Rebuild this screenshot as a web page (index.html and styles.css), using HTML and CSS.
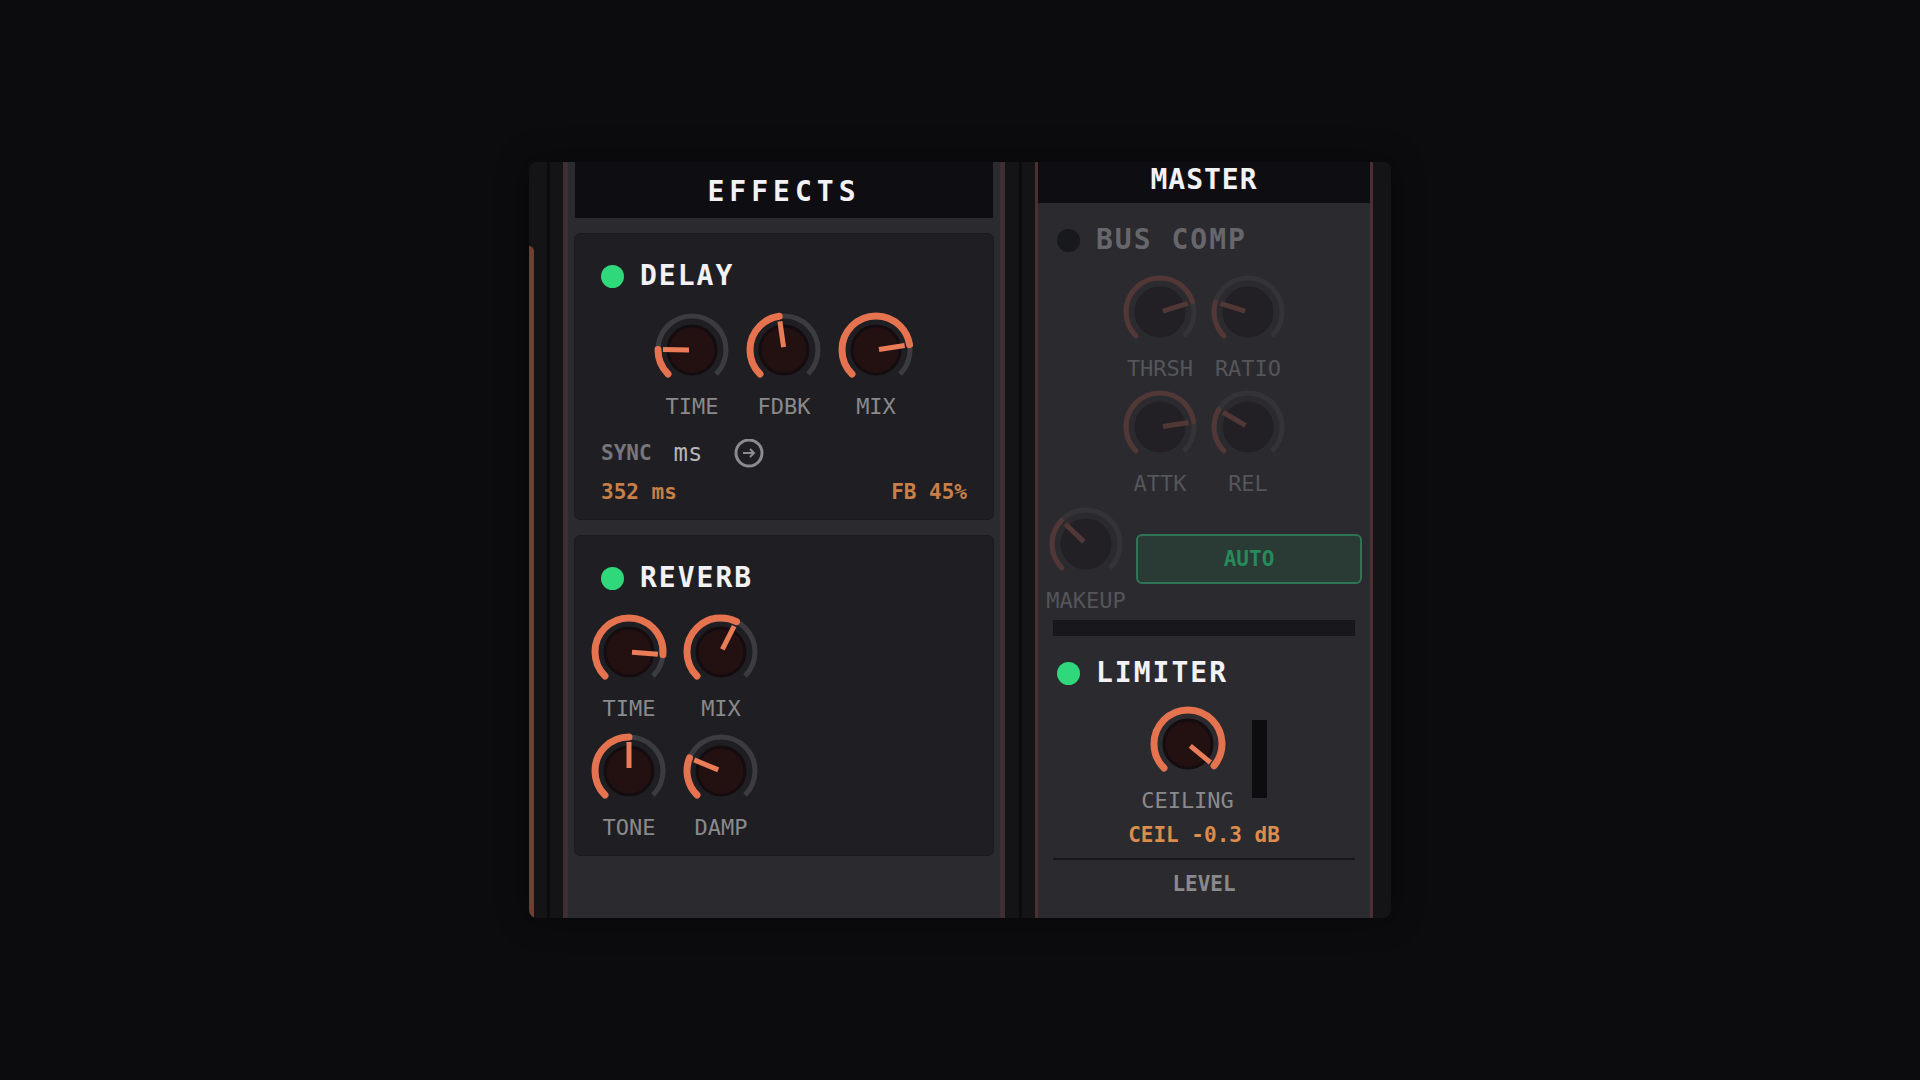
FILE: index.html
```
<!DOCTYPE html>
<html lang="en">
<head>
    <meta charset="UTF-8">
    <meta name="viewport" content="width=device-width, initial-scale=1.0">
    <title>Effects and Master</title>
    <link rel="stylesheet" href="styles.css">
</head>
<body>

    <main class="rack">
        <div class="rail rail-first"></div>

        <section class="panel effects">
            <h2 class="panel-title">EFFECTS</h2>

            <div class="card">
                <div class="module-head">
                    <button class="led on" type="button" aria-label="Delay on"></button>
                    <h3>DELAY</h3>
                </div>
                <div class="knob-row">
                    <div class="knob">
                        <input type="range" id="delayTime" value="17">
                        <label for="delayTime">TIME</label>
                    </div>
                    <div class="knob">
                        <input type="range" id="delayFdbk" value="47">
                        <label for="delayFdbk">FDBK</label>
                    </div>
                    <div class="knob">
                        <input type="range" id="delayMix" value="80">
                        <label for="delayMix">MIX</label>
                    </div>
                </div>
                <div class="sync-row">
                    <label for="sync">SYNC</label>
                    <select id="sync">
                        <option>ms</option>
                        <option>1/4</option>
                        <option>1/8</option>
                    </select>
                    <button class="next" type="button" aria-label="Next sync mode">
                        <svg viewBox="0 0 30 30">
                            <circle cx="15" cy="14" r="13"/>
                            <path d="M9 14h11M16 10l4 4l-4 4"/>
                        </svg>
                    </button>
                </div>
                <div class="readouts">
                    <span>352 ms</span>
                    <span>FB 45%</span>
                </div>
            </div>

            <div class="card">
                <div class="module-head">
                    <button class="led on" type="button" aria-label="Reverb on"></button>
                    <h3>REVERB</h3>
                </div>
                <div class="knob-grid">
                    <div class="knob">
                        <input type="range" id="reverbTime" value="85">
                        <label for="reverbTime">TIME</label>
                    </div>
                    <div class="knob">
                        <input type="range" id="reverbMix" value="60">
                        <label for="reverbMix">MIX</label>
                    </div>
                    <div class="knob">
                        <input type="range" id="reverbTone" value="50">
                        <label for="reverbTone">TONE</label>
                    </div>
                    <div class="knob">
                        <input type="range" id="reverbDamp" value="25">
                        <label for="reverbDamp">DAMP</label>
                    </div>
                </div>
            </div>
        </section>

        <div class="rail"></div>

        <section class="panel master">
            <h2 class="panel-title">MASTER</h2>

            <div class="bus-comp">
                <div class="module-head">
                    <button class="led" type="button" aria-label="Bus comp off"></button>
                    <h3>BUS COMP</h3>
                </div>
                <div class="knob-grid">
                    <div class="knob">
                        <input type="range" id="compThresh" value="77">
                        <label for="compThresh">THRSH</label>
                    </div>
                    <div class="knob">
                        <input type="range" id="compRatio" value="23">
                        <label for="compRatio">RATIO</label>
                    </div>
                    <div class="knob">
                        <input type="range" id="compAttack" value="80">
                        <label for="compAttack">ATTK</label>
                    </div>
                    <div class="knob">
                        <input type="range" id="compRelease" value="28">
                        <label for="compRelease">REL</label>
                    </div>
                </div>
                <div class="makeup-row">
                    <div class="knob">
                        <input type="range" id="compMakeup" value="33">
                        <label for="compMakeup">MAKEUP</label>
                    </div>
                    <button class="auto" type="button">AUTO</button>
                </div>
                <div class="reduction"></div>
            </div>

            <div class="limiter">
                <div class="module-head">
                    <button class="led on" type="button" aria-label="Limiter on"></button>
                    <h3>LIMITER</h3>
                </div>
                <div class="ceiling-row">
                    <div class="knob">
                        <input type="range" id="ceiling" value="98">
                        <label for="ceiling">CEILING</label>
                    </div>
                    <div class="meter"></div>
                </div>
                <div class="readout">CEIL -0.3 dB</div>
            </div>

            <div class="level">LEVEL</div>
        </section>

        <div class="rail rail-last"></div>
    </main>

    <script>
        // The dial sweeps 270 degrees, starting at the lower left
        const ARC = 'M-24 24A34 34 0 1 1 24 24';

        function drawKnob(knob) {
            const value = knob.querySelector('input').value;
            const sweep = value * 2.7;
            knob.querySelector('svg').innerHTML =
                '<path class="track" d="' + ARC + '"/>' +
                '<circle class="cap" r="24"/>' +
                '<path class="value" pathLength="270" stroke-dasharray="' + sweep + ' 400" d="' + ARC + '"/>' +
                '<path class="pointer" d="M0 -3V-29" transform="rotate(' + (sweep - 135) + ')"/>';
        }

        document.querySelectorAll('.knob').forEach(function(knob) {
            const svg = document.createElementNS('http://www.w3.org/2000/svg', 'svg');
            svg.setAttribute('viewBox', '-40 -40 80 80');
            svg.setAttribute('class', 'dial');
            knob.prepend(svg);
            drawKnob(knob);
            knob.querySelector('input').addEventListener('input', function() {
                drawKnob(knob);
            });
        });
    </script>

</body>
</html>
```
FILE: styles.css
```
* {
    box-sizing: border-box;
}

body {
    font-family: "DejaVu Sans Mono", "Liberation Mono", monospace;
    background-color: #0c0c0e;
    display: flex;
    justify-content: center;
    align-items: center;
    height: 100vh;
    margin: 0;
}

h2,
h3 {
    margin: 0;
    font-size: 28px;
    line-height: 32px;
    font-weight: bold;
    color: #f2f2f4;
}

h3 {
    letter-spacing: 2px;
}

button,
select {
    font-family: inherit;
    border: none;
    padding: 0;
    cursor: pointer;
}

.rack {
    display: grid;
    grid-template-columns: 34px 1fr 30px 338px 18px;
    width: 90%;
    max-width: 862px;
    height: 70vh;
    overflow: hidden;
    border-radius: 8px;
    background-color: #141417;
    box-shadow: 0 0 32px rgba(0, 0, 0, 0.4);
}

.rail {
    background: linear-gradient(#0a0a10, #0a0a10) center / 3px 100% no-repeat #141417;
}

.rail-first {
    display: flex;
    background-position: 18px 0;
    padding-top: 84px;
}

.rail-first::before {
    content: "";
    width: 5px;
    background-color: #703f33;
    border-top-right-radius: 5px;
}

.rail-last {
    background: #141417;
}

.panel {
    background-color: #2a2a2f;
    min-height: 0;
    overflow: hidden;
}

.panel-title {
    background-color: #0e0d12;
    text-align: center;
}

.effects {
    border: solid #3d2e32;
    border-width: 0 5px;
    padding: 0 6px;
}

.effects .panel-title {
    margin: 0 1px;
    padding: 14px 0 10px;
    letter-spacing: 5px;
}

.card {
    background-color: #1f1f23;
    border: 1px solid #1b1b1f;
    border-radius: 6px;
    margin-top: 15px;
    padding: 26px 14px 15px;
}

.module-head {
    display: flex;
    align-items: center;
    gap: 16px;
    padding-left: 12px;
}

.led {
    width: 23px;
    height: 23px;
    border-radius: 50%;
    background-color: #18191d;
}

.led.on {
    background-color: #2fd87a;
}

.knob {
    position: relative;
    display: flex;
    flex-direction: column;
    align-items: center;
    gap: 5px;
    min-width: 80px;
}

.knob label {
    font-size: 22px;
    line-height: 24px;
    color: #8a8a8d;
}

.knob input {
    position: absolute;
    top: 0;
    left: 0;
    width: 100%;
    height: 80px;
    margin: 0;
    opacity: 0;
    cursor: pointer;
}

.dial {
    width: 80px;
    height: 80px;
    fill: none;
    stroke-linecap: round;
}

.dial .track {
    stroke: #3c3c40;
    stroke-width: 5;
    stroke-linecap: butt;
}

.dial .cap {
    fill: #231112;
    stroke: #140c0e;
    stroke-width: 3;
}

.dial .value {
    stroke: #e57350;
    stroke-width: 7;
}

.dial .pointer {
    stroke: #ea7d58;
    stroke-width: 5;
    stroke-linecap: butt;
}

.knob-row {
    display: flex;
    justify-content: center;
    gap: 12px;
    margin-top: 18px;
}

.knob-grid {
    display: grid;
    grid-template-columns: 80px 80px;
    gap: 10px 12px;
    margin-top: 18px;
}

.sync-row {
    display: flex;
    align-items: center;
    margin-top: 20px;
    padding-left: 12px;
}

.sync-row label {
    font-size: 21px;
    line-height: 28px;
    font-weight: bold;
    color: #77777b;
}

.sync-row select {
    appearance: none;
    width: 60px;
    height: 28px;
    margin-left: 22px;
    background: none;
    font-size: 24px;
    color: #b5b5b8;
}

.next {
    width: 30px;
    height: 28px;
    background: none;
}

.next svg {
    display: block;
    width: 30px;
    height: 30px;
    fill: none;
    stroke: #8c8c90;
    stroke-width: 3;
}

.next path {
    stroke-width: 2;
}

.readouts {
    display: flex;
    justify-content: space-between;
    margin-top: 13px;
    padding: 0 12px;
}

.readouts,
.readout {
    font-size: 21px;
    line-height: 24px;
    font-weight: bold;
    color: #c97f47;
}

.master {
    border: solid #4a302e;
    border-width: 0 3px;
}

.master .panel-title {
    padding: 2px 0 7px;
    letter-spacing: 1px;
}

.bus-comp {
    padding: 21px 8px 0;
}

.bus-comp .module-head,
.limiter .module-head {
    padding-left: 11px;
}

.bus-comp h3 {
    color: #67676b;
}

.bus-comp .knob-grid {
    justify-content: center;
    gap: 6px 8px;
    margin-top: 16px;
}

.bus-comp .knob label {
    color: #55555a;
}

.bus-comp .dial {
    opacity: 0.25;
}

.bus-comp .dial .cap {
    fill: #0c0507;
    stroke: #0c0507;
}

.bus-comp .dial .track {
    stroke: #4e4e55;
}

.bus-comp .dial .value,
.bus-comp .dial .pointer {
    stroke: #c45f48;
    stroke-width: 5;
}

.makeup-row {
    display: flex;
    align-items: center;
    gap: 10px;
    margin-top: 8px;
}

.auto {
    flex: 1;
    height: 50px;
    border: 2px solid #2f7456;
    border-radius: 6px;
    background-color: #2a3a35;
    font-size: 21px;
    font-weight: bold;
    color: #278a5a;
}

.reduction {
    height: 16px;
    margin: 7px 7px 0;
    background-color: #18181c;
}

.limiter {
    padding: 21px 8px 0;
}

.ceiling-row {
    display: flex;
    justify-content: center;
    align-items: center;
    gap: 18px;
    margin-top: 15px;
}

.meter {
    width: 15px;
    height: 78px;
    background-color: #0d0d0f;
}

.readout {
    margin-top: 10px;
    text-align: center;
    color: #dc8c4b;
}

.level {
    margin: 11px 15px 0;
    padding-top: 12px;
    border-top: 2px solid #17171b;
    font-size: 21px;
    line-height: 24px;
    font-weight: bold;
    text-align: center;
    color: #8a8a8d;
}
```
